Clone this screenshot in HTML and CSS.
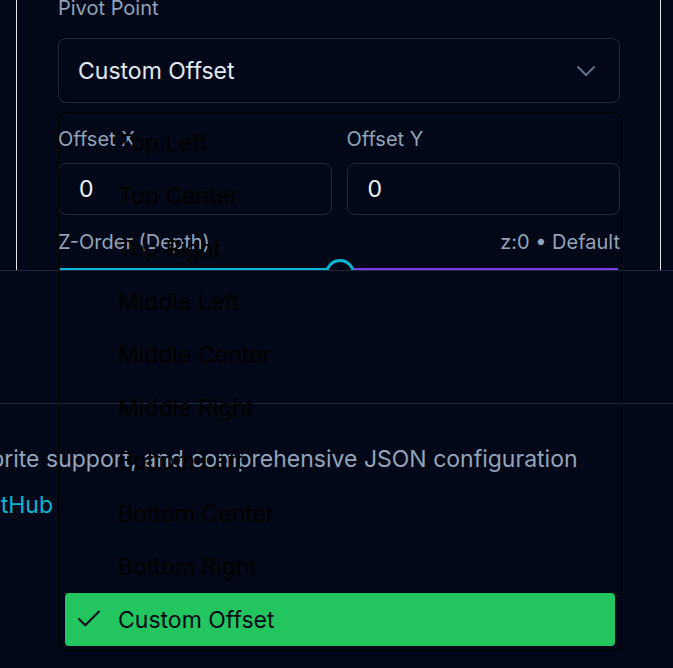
FILE: index.html
```html
<!DOCTYPE html>
<html>
<head>
<meta charset="utf-8">
<link rel="stylesheet" href="styles.css">
</head>
<body>
<div class="viewport-top">
  <div class="card">
    <div class="field pivot">
      <label class="label">Pivot Point</label>
      <div class="select">
        <span>Custom Offset</span>
        <svg class="chev" width="18" height="10" viewBox="0 0 18 10" fill="none" stroke="currentColor" stroke-width="1.8" stroke-linecap="round" stroke-linejoin="round"><path d="M1 1l8 8 8-8"/></svg>
      </div>
    </div>
    <div class="row2">
      <div class="field">
        <label class="label">Offset X</label>
        <div class="input">0</div>
      </div>
      <div class="field">
        <label class="label">Offset Y</label>
        <div class="input">0</div>
      </div>
    </div>
    <div class="zrow">
      <span class="label">Z-Order (Depth)</span>
      <span class="label">z:0 • Default</span>
    </div>
    <div class="slider">
      <div class="track-left"></div>
      <div class="thumb"></div>
      <div class="track-right"></div>
    </div>
  </div>
</div>
<div class="mid"></div>
<footer class="footer">
  <p class="desc">sprite support, and comprehensive JSON configuration</p>
  <a class="gh">GitHub</a>
</footer>

<div class="menu">
  <div class="item">Top Left</div>
  <div class="item">Top Center</div>
  <div class="item">Top Right</div>
  <div class="item">Middle Left</div>
  <div class="item">Middle Center</div>
  <div class="item">Middle Right</div>
  <div class="item">Bottom Left</div>
  <div class="item">Bottom Center</div>
  <div class="item">Bottom Right</div>
  <div class="item selected">
    <svg class="check" width="30" height="30" viewBox="0 0 24 24" fill="none" stroke="currentColor" stroke-width="1.6" stroke-linecap="round" stroke-linejoin="round"><path d="M20 6 9 17l-5-5"/></svg>
    Custom Offset
  </div>
</div>
</body>
</html>
```
FILE: styles.css
```css
* { box-sizing: border-box; }
html, body { margin: 0; padding: 0; }
body {
  background: #020817;
  font-family: Inter, "Noto Sans", sans-serif;
  width: 673px;
  height: 668px;
  overflow: hidden;
  position: relative;
}
.viewport-top {
  height: 270px;
  overflow: hidden;
}
.card {
  margin: -6px 12px 0 16px;
  border-left: 1px solid #e5e7eb;
  border-right: 1px solid #e5e7eb;
  padding: 0 40px 0 41px;
  height: 400px;
}
.field { display: flex; flex-direction: column; }
.label {
  color: #94a3b8;
  font-size: 20px;
  line-height: 28px;
}
.field > .label { margin-bottom: 10px; }
.pivot > .label { margin-bottom: 16px; }
.select {
  height: 65px;
  border: 1px solid #1e293b;
  border-radius: 8px;
  display: flex;
  align-items: center;
  justify-content: space-between;
  padding: 0 24px 0 19px;
  color: #e2e8f0;
  font-size: 23px;
}
.chev { color: #64748b; }
.row2 {
  display: grid;
  grid-template-columns: 1fr 1fr;
  gap: 15px;
  margin-top: 22px;
}
.input {
  height: 52px;
  border: 1px solid #1e293b;
  border-radius: 8px;
  display: flex;
  align-items: center;
  padding: 0 20px;
  color: #f1f5f9;
  font-size: 23px;
}
.zrow {
  display: flex;
  justify-content: space-between;
  margin-top: 13px;
}
.slider {
  display: flex;
  align-items: flex-start;
  margin-top: -1px;
  height: 36px;
}
.track-left { height: 2px; margin-top: 13px; background: #06b6d4; flex: 0 0 266px; margin-left: 2px; }
.track-right { height: 2px; margin-top: 13px; background: #7c3aed; flex: 1; margin-right: 2px; }
.thumb {
  width: 30px; height: 30px;
  margin-top: 4px;
  border-radius: 50%;
  border: 3px solid #06b6d4;
  background: #020817;
  margin-left: -1px;
  margin-right: -1px;
}
.mid {
  height: 133px;
  border-top: 1px solid #1e293b;
}
.footer {
  border-top: 1px solid #1e293b;
  padding-top: 40px;
}
.desc {
  margin: 0 0 0 -22px;
  white-space: nowrap;
  color: #94a3b8;
  font-size: 23px;
  line-height: 30px;
}
.gh {
  display: block;
  margin: 16px 0 0 -22px;
  color: #06b6d4;
  font-size: 23px;
  line-height: 30px;
}
.menu {
  position: absolute;
  left: 58px;
  top: 112px;
  width: 564px;
  border: 1px solid #000;
  border-radius: 8px;
  padding: 3px 6px 4px;
  display: flex;
  flex-direction: column;
}
.item {
  height: 53px;
  display: flex;
  align-items: center;
  padding-left: 53px;
  color: #000;
  font-size: 23px;
  border-radius: 4px;
  position: relative;
}
.item.selected {
  background: #22c55e;
  color: #020817;
}
.check {
  position: absolute;
  left: 9px;
  top: 11px;
}
```
